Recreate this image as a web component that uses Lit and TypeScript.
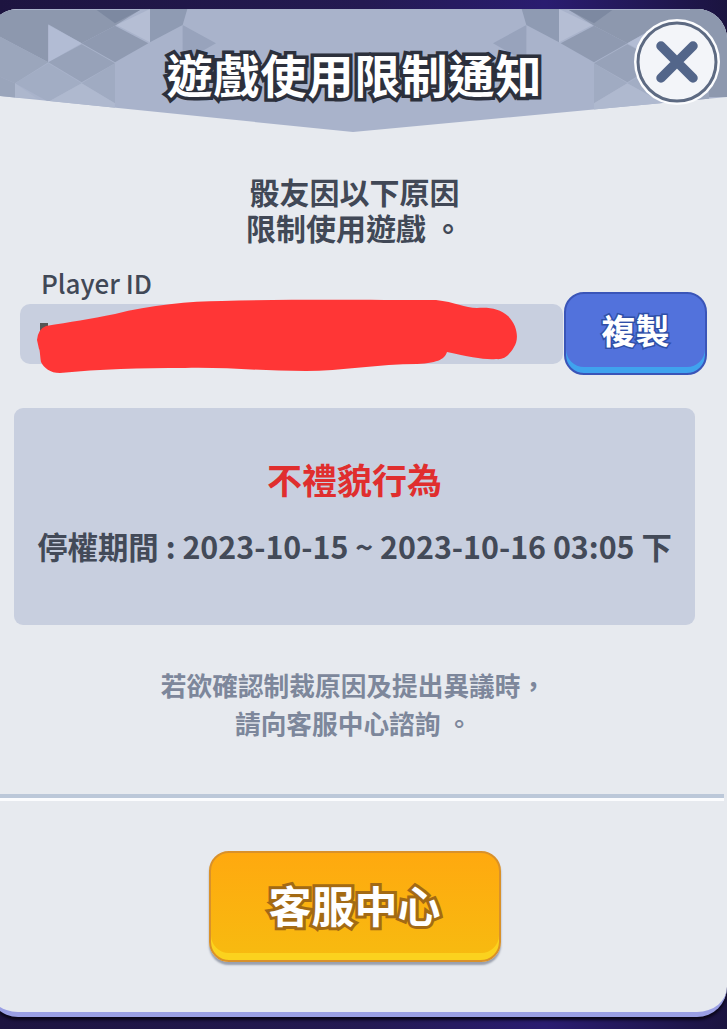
import { LitElement, html, css, svg } from "lit";
import { customElement } from "lit/decorators.js";

const polys: [string, string][] = [
  ["0,15 420,15 345,62 245,115 145,58 145,172 0,95", "#8d98ae"],
  ["290,15 420,15 345,55", "#7d89a1"],
  ["145,60 245,115 145,172", "#b2bcd4"],
  ["350,60 450,12 450,112", "#b5bed4"],
  ["450,12 562,12 548,60 450,112", "#8f9bb3"],
  ["548,60 648,115 548,172", "#98a3bc"],
  ["245,115 345,62 445,115 345,172", "#8f9ab1"],
  ["145,172 245,118 345,175 245,232", "#97a2b9"],
  ["345,175 345,295 245,235", "#a0abc2"],
  ["0,95 145,172 45,235 0,215", "#9ba6bc"],
  ["45,235 145,175 245,235 145,290", "#a2adc4"],
  ["45,235 110,280 45,280", "#adb7cd"],
  ["0,215 45,235 45,290 0,290", "#9aa5bb"],
  ["145,290 245,235 345,295 345,320 145,320", "#afb9cf"],
];

@customElement("app-root")
export class AppRoot extends LitElement {
  static styles = css`
    :host {
      display: block;
      width: 727px;
      height: 1029px;
      overflow: hidden;
      background: linear-gradient(90deg, #1d1440, #241a52 50%, #2a1c70 75%, #1b1440);
      font-family: "Noto Sans CJK TC", "Noto Sans", sans-serif;
    }
    .card {
      box-sizing: border-box;
      width: 739px;
      margin: 9px 0 0 -12px;
      padding-left: 12px;
      position: relative;
      background: #e7eaef;
      border-bottom: 5px solid #9a9fe4;
      border-radius: 30px;
      box-shadow: 0 3px 3px #0a0618;
      overflow: hidden;
    }
    .inner {
      width: 727px;
      position: relative;
    }
    .head {
      display: grid;
      height: 123px;
    }
    .head > * {
      grid-area: 1 / 1;
    }
    .decor {
      display: block;
      width: 727px;
      height: 123px;
    }
    .title {
      margin: 36px 0 0;
      height: 56px;
      line-height: 56px;
      font-size: 46px;
      font-weight: 700;
      text-align: center;
      color: #fff;
      letter-spacing: 1px;
      padding-right: 18px;
      -webkit-text-stroke: 7px #2c303c;
      paint-order: stroke fill;
    }
    .close {
      position: absolute;
      left: 634px;
      top: 10px;
      width: 86px;
      height: 86px;
      display: block;
    }
    .intro {
      margin: 41px 0 0;
      padding-right: 18px;
      font-size: 30px;
      line-height: 36px;
      font-weight: 700;
      color: #414856;
      text-align: center;
    }
    .label {
      margin: 30px 0 0 41px;
      font-size: 26px;
      line-height: 16px;
      font-weight: 500;
      color: #414856;
    }
    .row {
      position: relative;
      height: 83px;
      margin-top: 1px;
      padding: 0 20px;
      display: flex;
      align-items: center;
      gap: 1px;
    }
    .field {
      width: 543px;
      height: 60px;
      border-radius: 10px;
      background: #c8cfdf;
      flex: none;
    }
    .copy {
      box-sizing: border-box;
      width: 143px;
      height: 83px;
      flex: none;
      border: 2px solid #3a55b8;
      border-radius: 20px;
      background: #5272dc;
      box-shadow: inset 0 -6px 0 #3fa3ee;
      display: flex;
      align-items: center;
      justify-content: center;
      padding-bottom: 8px;
      color: #fff;
      font-size: 34px;
      font-weight: 700;
      -webkit-text-stroke: 3px #2f4fa8;
      paint-order: stroke fill;
    }
    .scribble {
      position: absolute;
      left: 0;
      top: 0;
      width: 727px;
      height: 83px;
      overflow: visible;
    }
    .panel {
      box-sizing: border-box;
      width: 681px;
      height: 217px;
      margin: 33px 0 0 14px;
      padding-top: 51px;
      border-radius: 9px;
      background: #c8cfdf;
      text-align: center;
    }
    .reason {
      font-size: 35px;
      line-height: 40px;
      font-weight: 700;
      color: #e02e2e;
    }
    .period {
      margin-top: 27px;
      font-size: 30.4px;
      line-height: 40px;
      font-weight: 700;
      color: #434a58;
      white-space: nowrap;
    }
    .hint {
      margin: 41px 0 0;
      padding-right: 20px;
      font-size: 25.7px;
      line-height: 38px;
      font-weight: 700;
      color: #7d879b;
      text-align: center;
    }
    .divider {
      width: 724px;
      height: 4px;
      margin-top: 52px;
      background: #bcc8d9;
      border-bottom: 3px solid #fbfcfe;
    }
    .foot {
      display: flex;
      justify-content: center;
      padding: 50px 18px 50px 0;
    }
    .support {
      box-sizing: border-box;
      width: 292px;
      height: 111px;
      border: 2px solid #d9912a;
      border-radius: 20px;
      background: linear-gradient(180deg, #ffa90f, #f7bb10);
      box-shadow: inset 0 -7px 0 #fbd21e, 0 3px 2px #9aa0ad;
      display: flex;
      align-items: center;
      justify-content: center;
      padding-bottom: 6px;
      color: #fff;
      font-size: 43px;
      font-weight: 700;
      -webkit-text-stroke: 6px #a36a14;
      paint-order: stroke fill;
    }
  `;

  private decor() {
    const g = polys.map(([p, f]) => svg`<polygon points=${p} fill=${f}></polygon>`);
    return html`<svg class="decor" viewBox="0 9 727 123" aria-hidden="true">
      <defs>
        <clipPath id="hc"><polygon points="0,9 727,9 727,97 353,132 0,96"></polygon></clipPath>
      </defs>
      <g clip-path="url(#hc)">
        <rect x="0" y="9" width="727" height="123" fill="#a9b3cb"></rect>
        <polygon points="690,9 727,9 727,97 690,97" fill="#8d98ae"></polygon>
        <g transform="translate(0,5) scale(.3333)">${g}</g>
        <g transform="translate(709,5) scale(-.3333,.3333)">${g}</g>
      </g>
    </svg>`;
  }

  render() {
    return html`<div class="card">
      <div class="inner">
        <header class="head">
          ${this.decor()}
          <div class="title">遊戲使用限制通知</div>
        </header>
        <svg class="close" viewBox="0 0 86 86" aria-label="close">
          <circle cx="43" cy="43" r="43" fill="#fbfcfe"></circle>
          <circle cx="43" cy="43" r="39" fill="#f3f5f9" stroke="#5d6a82" stroke-width="3"></circle>
          <path d="M27 27 L59 59 M59 27 L27 59" stroke="#53668a" stroke-width="9.5" stroke-linecap="round"></path>
        </svg>
        <p class="intro">骰友因以下原因<br />限制使用遊戲 。</p>
        <div class="label">Player ID</div>
        <div class="row">
          <div class="field"></div>
          <div class="copy">複製</div>
          <svg class="scribble" viewBox="0 292 727 83" aria-hidden="true">
            <rect x="40" y="323" width="8" height="8" fill="#555"></rect>
            <path
              d="M37 340 Q38 329 46 326 C70 322 90 319 115 314 C150 305 190 301 222 301 C290 299 370 300 436 300 C455 302 465 308 477 308 C490 307 500 309 508 316 C518 326 519 340 514 347 C509 356 503 360 496 359 C485 360 470 357 447 352 C445 358 440 363 417 364 C380 364 340 371 306 371 C260 371 225 367 185 368 C140 368 100 369 60 373 C50 373 44 368 41 362 C40 356 40 350 39 349 Z"
              fill="#ff3636"
            ></path>
          </svg>
        </div>
        <section class="panel">
          <div class="reason">不禮貌行為</div>
          <div class="period">停權期間 : 2023-10-15 ~ 2023-10-16 03:05 下</div>
        </section>
        <p class="hint">若欲確認制裁原因及提出異議時，<br />請向客服中心諮詢 。</p>
        <div class="divider"></div>
        <div class="foot">
          <div class="support">客服中心</div>
        </div>
      </div>
    </div>`;
  }
}
